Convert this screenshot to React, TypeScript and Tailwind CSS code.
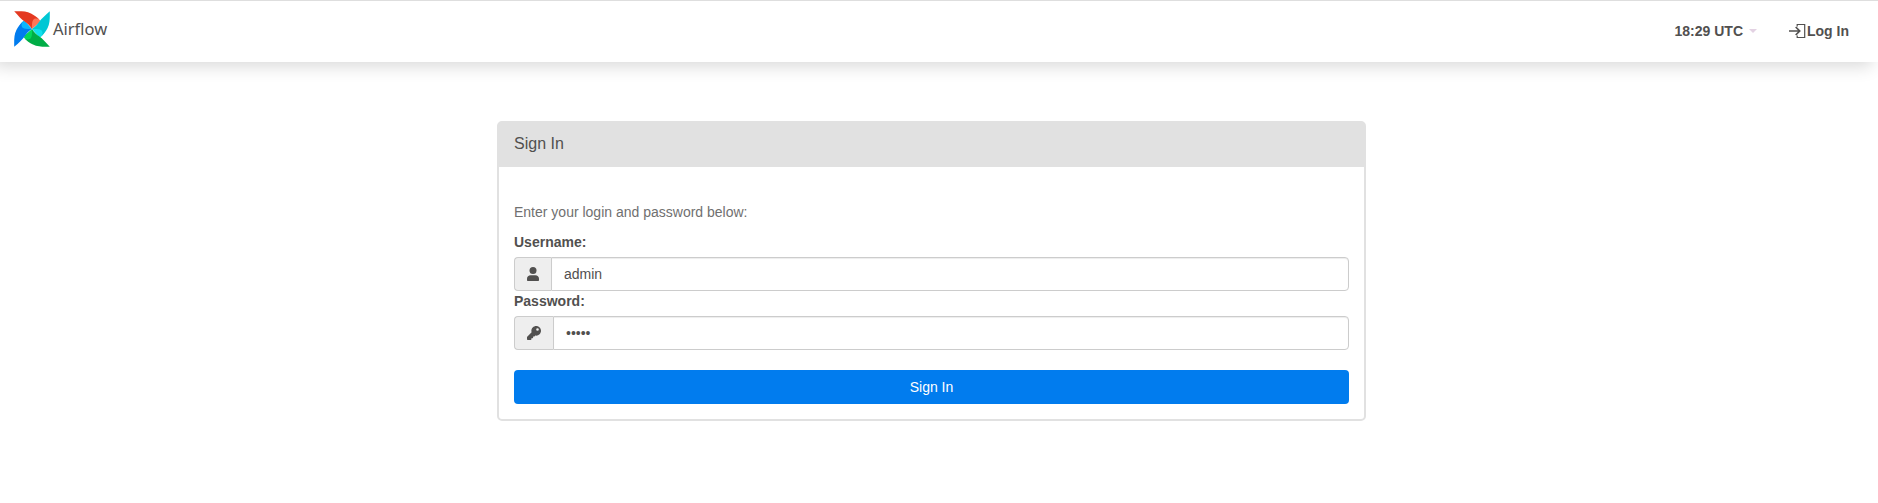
import React from "react";

const turns = [0, 90, 180, 270];
const mainColors = ["#e43921", "#00c7d4", "#00ad46", "#017cee"];
const foldColors = ["#ff7557", "#11e1ee", "#04d659", "#0cb6ff"];

function Pinwheel() {
  return (
    <svg className="h-9 w-9 shrink-0" viewBox="-18 -18 36 36" aria-hidden="true">
      {turns.map((t, i) => (
        <path
          key={t}
          transform={`rotate(${t})`}
          d="M-1 -13C2 -13.500 5.500 -11.500 8.200 -8.600L7.500 -6.500L0 0Z"
          fill={foldColors[i]}
        />
      ))}
      {turns.map((t, i) => (
        <path
          key={t}
          transform={`rotate(${t})`}
          d="M-17.800 -17.800C-12 -17.800 -6 -18.200 -1 -15.600C2.500 -13.800 5.500 -11.500 7.600 -9.200C5 -11 2.500 -10.800 1.300 -9.300C-0.300 -7.200 0 -3 0 0C-2 -3 -4.500 -5.700 -7.400 -7.400C-10.500 -9.500 -13.500 -13 -17.800 -17.800Z"
          fill={mainColors[i]}
        />
      ))}
    </svg>
  );
}

function LoginIcon() {
  return (
    <svg className="h-[18px] w-[18px]" viewBox="0 0 18 18" fill="none" stroke="#51504f" aria-hidden="true">
      <path d="M8.200 4.400V2.500H15.700V15.500H8.200V13.600" strokeWidth="1.200" />
      <path d="M-0.500 9H10M6.700 5L10.700 9L6.700 13" strokeWidth="1.700" />
    </svg>
  );
}

function UserIcon() {
  return (
    <svg className="h-3.5 w-3" viewBox="0 0 12 14" fill="#51504f" aria-hidden="true">
      <circle cx="6" cy="3.500" r="3.500" />
      <path d="M0 13V11.600C0 9.500 1.600 8.200 3.600 8.200H8.400C10.400 8.200 12 9.500 12 11.600V13C12 13.600 11.600 14 11 14H1C.4 14 0 13.600 0 13Z" />
    </svg>
  );
}

function KeyIcon() {
  return (
    <svg className="h-3.5 w-3.5" viewBox="0 0 512 512" fill="#51504f" aria-hidden="true">
      <path d="M512 176C512 273 433 352 336 352C325 352 314 351 303 349L279 376C275 381 268 384 261 384H224V424C224 437 213 448 200 448H160V488C160 501 149 512 136 512H24C11 512 0 501 0 488V410C0 404 3 397 7 393L169 231C163 214 160 195 160 176C160 79 239 0 336 0S512 79 512 176ZM336 128A48 48 0 1 0 432 128A48 48 0 1 0 336 128Z" />
    </svg>
  );
}

type FieldProps = {
  id: string;
  label: string;
  type: string;
  value: string;
  icon: React.ReactNode;
};

function Field({ id, label, type, value, icon }: FieldProps) {
  return (
    <div>
      <label htmlFor={id} className="mb-[5px] block font-bold leading-5">
        {label}
      </label>
      <div className="flex h-[34px]">
        <span className="flex items-center rounded-l border border-r-0 border-[#ccc] bg-[#eee] px-3">
          {icon}
        </span>
        <input
          id={id}
          type={type}
          defaultValue={value}
          className="min-w-0 flex-1 rounded-r border border-[#ccc] bg-white px-3 text-[#51504f] shadow-[inset_0_1px_1px_rgba(0,0,0,0.075)] outline-none"
        />
      </div>
    </div>
  );
}

export default function App() {
  return (
    <div className="h-[503px] overflow-hidden bg-white font-['Liberation_Sans',Arial,sans-serif] text-sm leading-5 text-[#51504f]">
      <nav className="flex h-[62px] items-start justify-between border-t border-[#dedede] bg-white pr-[29px] pl-3.5 shadow-[-6px_4px_16px_rgba(0,0,0,0.155)]">
        <a className="flex pt-2.5">
          <Pinwheel />
          <span className="ml-[3px] pt-2 font-['Noto_Sans',sans-serif] text-[16.500px] leading-5">Airflow</span>
        </a>
        <div className="flex pt-5 font-bold">
          <span className="flex items-center">
            18:29 UTC
            <span className="ml-1.5 border-x-4 border-t-4 border-x-transparent border-t-[#e3d2e3]" />
          </span>
          <span className="ml-8 flex items-center">
            <LoginIcon />
            Log In
          </span>
        </div>
      </nav>
      <div className="pr-[15px] pt-[59px]">
        <main className="mx-auto h-[300px] w-[869px] rounded-[5px] border-2 border-[#e1e1e1] bg-white">
          <h1 className="h-11 bg-[#e1e1e1] px-[15px] pt-[11px] text-base leading-5">Sign In</h1>
          <form className="px-[15px] pt-[35px]">
            <p className="mb-2.5 text-[#707070]">Enter your login and password below:</p>
            <Field id="username" label="Username:" type="text" value="admin" icon={<UserIcon />} />
            <Field id="password" label="Password:" type="password" value="admin" icon={<KeyIcon />} />
            <button type="button" className="mt-5 h-[34px] w-full rounded bg-[#017cee] text-white">
              Sign In
            </button>
          </form>
        </main>
      </div>
    </div>
  );
}
